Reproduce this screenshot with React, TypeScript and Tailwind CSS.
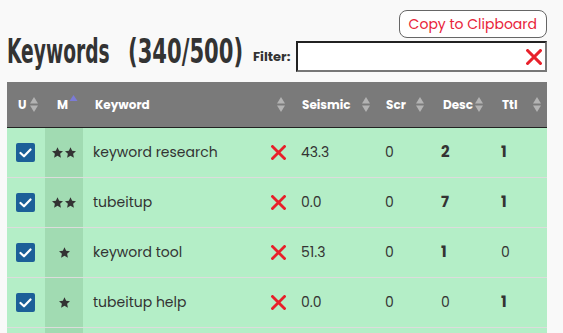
import React from 'react';

const rows = [
  { kw: 'keyword research', stars: 2, seismic: '43.3', scr: '0', desc: '2', descBold: true, ttl: '1', ttlBold: true },
  { kw: 'tubeitup', stars: 2, seismic: '0.0', scr: '0', desc: '7', descBold: true, ttl: '1', ttlBold: true },
  { kw: 'keyword tool', stars: 1, seismic: '51.3', scr: '0', desc: '1', descBold: true, ttl: '0', ttlBold: false },
  { kw: 'tubeitup help', stars: 1, seismic: '0.0', scr: '0', desc: '0', descBold: false, ttl: '1', ttlBold: true },
];

const cols = 'grid grid-cols-[38px_38px_207px_84px_57px_59px_57px]';

function SortIcon({ active }: { active?: boolean }) {
  if (active) {
    return (
      <svg width="9" height="14" viewBox="0 0 9 14" className="shrink-0">
        <path d="M4.5 0 L8.5 6 L0.5 6 Z" fill="#7b7bd6" />
      </svg>
    );
  }
  return (
    <svg width="8" height="15" viewBox="0 0 8 15" className="shrink-0">
      <path d="M4 0 L8 6.5 L0 6.5 Z" fill="#b3b3b3" />
      <path d="M4 15 L8 8.5 L0 8.5 Z" fill="#b3b3b3" />
    </svg>
  );
}

function RedX({ size = 15 }: { size?: number }) {
  return (
    <svg width={size} height={size} viewBox="0 0 15 15" className="shrink-0">
      <path d="M1.5 1.5 L13.5 13.5 M13.5 1.5 L1.5 13.5" stroke="#e8202a" strokeWidth="2.8" strokeLinecap="square" />
    </svg>
  );
}

function Check() {
  return (
    <div className="w-[19px] h-[19px] rounded-[2px] bg-[#1c5f98] flex items-center justify-center">
      <svg width="13" height="10" viewBox="0 0 13 10">
        <path d="M1.5 5 L5 8.3 L11.5 1.5" stroke="#ffffff" strokeWidth="2.2" fill="none" strokeLinecap="round" strokeLinejoin="round" />
      </svg>
    </div>
  );
}

function Star() {
  return (
    <svg width="11" height="11" viewBox="1.5 1.5 21 20">
      <path d="M12 1.5 L15.1 8.2 L22.5 9 L17 14 L18.5 21.3 L12 17.6 L5.5 21.3 L7 14 L1.5 9 L8.9 8.2 Z" fill="#333" />
    </svg>
  );
}

function Stars({ n }: { n: number }) {
  return (
    <div className="flex gap-[2px]">
      {Array.from({ length: n }).map((_, i) => (
        <Star key={i} />
      ))}
    </div>
  );
}

const headFont = "font-['DejaVu_Sans_Condensed','Liberation_Sans',sans-serif] font-bold text-[34px] leading-none text-[#333] whitespace-nowrap";

export default function App() {
  return (
    <div className="w-[563px] h-[333px] overflow-hidden bg-[#f9f9f9] font-['Poppins','Open_Sans',sans-serif] text-[#333]">
      <div className="flex justify-end pr-[16px] pt-[10px]">
        <button className="h-[28px] px-[9px] rounded-[8px] border border-[#666] bg-white text-[#e8243a] text-[14px] leading-none">
          Copy to Clipboard
        </button>
      </div>
      <div className="flex items-end pl-[7px] pr-[16px] mt-[4px] h-[30px]">
        <div className="w-[236px] h-[30px] relative shrink-0">
          <div className={`absolute left-0 bottom-[4px] origin-bottom-left scale-x-[0.61] ${headFont}`}>Keywords</div>
          <div className={`absolute left-[121px] bottom-[4px] origin-bottom-left scale-x-[0.69] ${headFont}`}>(340/500)</div>
        </div>
        <span className="ml-[10px] mb-[9px] text-[13px] font-bold leading-none">Filter:</span>
        <div className="ml-[6px] flex-1 h-[31px] bg-white border-2 border-t-[#222] border-l-[#222] border-b-[#777] border-r-[#777] flex items-center justify-end pr-[3px]">
          <RedX size={16} />
        </div>
      </div>
      <div className="mx-[7px] mt-[10px] w-[540px]">
        <div className={`${cols} h-[46px] bg-[#7a7a7a] border-b border-[#222] text-white text-[12px] font-bold`}>
          <div className="flex items-center gap-[4px] pl-[11px]"><span>U</span><SortIcon /></div>
          <div className="flex items-center gap-[1px] pl-[12px]"><span>M</span><div className="-mt-[6px]"><SortIcon active /></div></div>
          <div className="flex items-center justify-between pl-[12px] pr-[5px]"><span>Keyword</span><SortIcon /></div>
          <div className="flex items-center justify-between pl-[12px] pr-[4px]"><span>Seismic</span><SortIcon /></div>
          <div className="flex items-center justify-between pl-[12px] pr-[7px]"><span>Scr</span><SortIcon /></div>
          <div className="flex items-center gap-[2px] pl-[12px]"><span>Desc</span><SortIcon /></div>
          <div className="flex items-center justify-between pl-[12px] pr-[6px]"><span>Ttl</span><SortIcon /></div>
        </div>
        {rows.map((r, i) => (
          <div key={i} className={`${cols} h-[50px] bg-[#b4eec7] border-b border-[#dcdcdc] text-[14px]`}>
            <div className="flex items-center pl-[9px]"><Check /></div>
            <div className="flex items-center justify-center bg-[#a1dbb2]"><Stars n={r.stars} /></div>
            <div className="flex items-center justify-between pl-[10px] pr-[4px]">
              <span>{r.kw}</span>
              <RedX />
            </div>
            <div className="flex items-center pl-[11px]">{r.seismic}</div>
            <div className="flex items-center pl-[11px]">{r.scr}</div>
            <div className={`flex items-center pl-[10px] ${r.descBold ? 'font-bold text-[15px]' : ''}`}>{r.desc}</div>
            <div className={`flex items-center pl-[11px] ${r.ttlBold ? 'font-bold text-[15px]' : ''}`}>{r.ttl}</div>
          </div>
        ))}
        <div className={`${cols} h-[50px] bg-[#b4eec7]`}>
          <div />
          <div className="bg-[#a1dbb2]" />
        </div>
      </div>
    </div>
  );
}
